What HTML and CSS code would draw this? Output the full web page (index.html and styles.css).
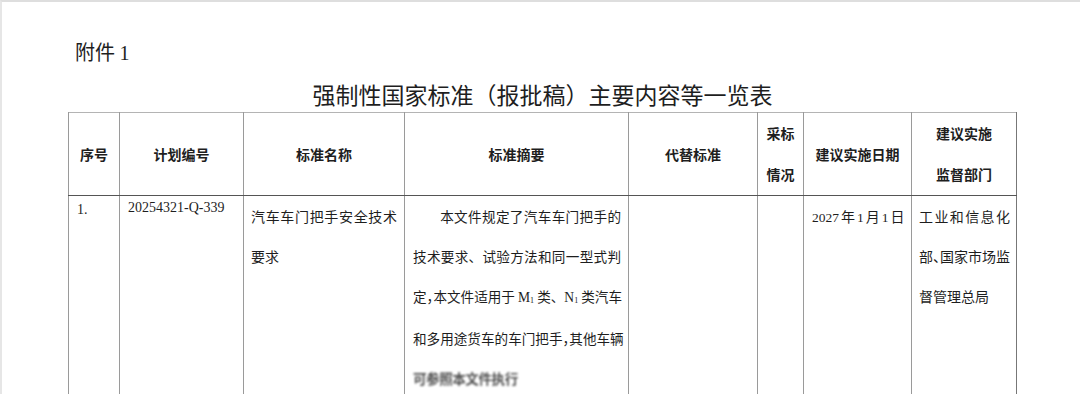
FILE: index.html
```html
<!DOCTYPE html>
<html lang="zh-CN">
<head>
<meta charset="utf-8">
<title>强制性国家标准（报批稿）主要内容等一览表</title>
<link rel="stylesheet" href="styles.css">
</head>
<body>
<div class="page">
  <div class="attach">附件 <span class="serif">1</span></div>
  <h1 class="title">强制性国家标准（报批稿）主要内容等一览表</h1>
  <table class="sheet">
    <colgroup>
      <col class="c1"><col class="c2"><col class="c3"><col class="c4">
      <col class="c5"><col class="c6"><col class="c7"><col class="c8">
    </colgroup>
    <thead>
      <tr>
        <th>序号</th>
        <th>计划编号</th>
        <th>标准名称</th>
        <th>标准摘要</th>
        <th>代替标准</th>
        <th class="two">采标<br>情况</th>
        <th>建议实施日期</th>
        <th class="two">建议实施<br>监督部门</th>
      </tr>
    </thead>
    <tbody>
      <tr>
        <td><div class="code">1.</div></td>
        <td><div class="code">20254321-Q-339</div></td>
        <td>
          <div class="ln">汽车车门把手安全技术</div>
          <div>要求</div>
        </td>
        <td class="abs">
          <div class="ln indent">本文件规定了汽车车门把手的</div>
          <div class="ln">技术要求、试验方法和同一型式判</div>
          <div class="ln">定<span class="half">，</span>本文件适用于 <span class="serif">M<sub>1</sub></span> 类、<span class="serif">N<sub>1</sub></span> 类汽车</div>
          <div class="ln">和多用途货车的车门把手<span class="half">，</span>其他车辆</div>
          <div class="blur">可参照本文件执行</div>
        </td>
        <td></td>
        <td></td>
        <td><span class="num">2027</span>年<span class="num">1</span>月<span class="num">1</span>日</td>
        <td class="dept">
          <div class="ln">工业和信息化</div>
          <div class="ln">部<span class="half">、</span>国家市场监</div>
          <div>督管理总局</div>
        </td>
      </tr>
    </tbody>
  </table>
</div>
</body>
</html>
```

FILE: styles.css
```css
html, body {
  margin: 0;
  padding: 0;
  background: #ffffff;
  overflow: hidden;
}

.page {
  height: 392px;
  border-top: 2px solid #dedede;
  border-left: 2px solid #e6e6e6;
  font-family: "Noto Sans CJK SC", "Noto Sans", sans-serif;
  color: #1e1e1e;
  padding-left: 66px;
}

.serif, .code, .num {
  font-family: "Liberation Serif", "Noto Sans CJK SC", serif;
}

.attach {
  margin-top: 36px;
  margin-left: 7px;
  font-size: 20px;
  line-height: 28px;
}

.title {
  margin: 11px 0 0 0;
  width: 949px;
  text-align: center;
  font-size: 23px;
  font-weight: 400;
  line-height: 32px;
}

.sheet {
  margin-top: 2px;
  width: 949px;
  border-collapse: collapse;
  table-layout: fixed;
  border-top: 1px solid #b4b4b4;
  border-right: 1px solid #777;
}

.c1 { width: 51px; }
.c2 { width: 124px; }
.c3 { width: 161px; }
.c4 { width: 224px; }
.c5 { width: 129px; }
.c6 { width: 46px; }
.c7 { width: 108px; }
.c8 { width: 105px; }

.sheet th {
  height: 77px;
  padding: 0;
  font-size: 14px;
  font-weight: 700;
  line-height: 41px;
  text-align: center;
  vertical-align: middle;
  border-left: 1px solid #9a9a9a;
  border-bottom: 1px solid #555;
}

.sheet td {
  padding: 0 7px;
  font-size: 14px;
  line-height: 40px;
  vertical-align: top;
  border-left: 1px solid #9a9a9a;
  height: 220px;
}

.sheet td:nth-child(1) { padding-left: 8px; }
.sheet td:nth-child(2) { padding-left: 8px; }
.sheet td:nth-child(7) { padding-left: 8px; padding-right: 2px; }
.sheet td.abs { padding: 0 7px 0 8px; font-size: 13.6px; }
.sheet td.dept { padding: 0 6px 0 7px; }

.code {
  font-size: 14px;
  line-height: 24px;
}

.sheet td:nth-child(1) .code {
  line-height: 28px;
}

.ln {
  white-space: nowrap;
  text-align: justify;
  text-align-last: justify;
}

.indent {
  text-indent: 2em;
}

.half {
  letter-spacing: -0.5em;
}

sub {
  font-size: 8px;
  vertical-align: -1px;
  line-height: 0;
}

.num {
  font-size: 13.5px;
  margin: 0 2px;
}

.num:first-child {
  margin-left: 0;
}

.blur {
  color: #111;
  font-weight: 700;
  filter: blur(1.3px);
  letter-spacing: -0.5px;
  white-space: nowrap;
  opacity: 0.75;
}
```
